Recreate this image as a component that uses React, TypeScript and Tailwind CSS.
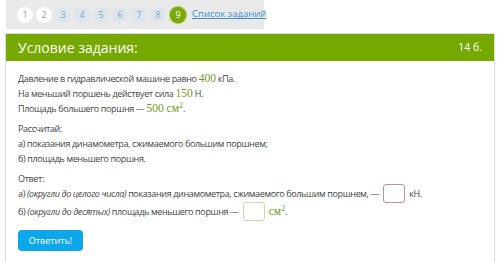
const nums = [1, 2, 3, 4, 5, 6, 7, 8];

function Val({ children }: { children: React.ReactNode }) {
  return (
    <span className="text-[#6f9a1c] text-[11.5px] tracking-normal" style={{ fontFamily: '"Liberation Serif", serif' }}>
      {children}
    </span>
  );
}

export default function App() {
  return (
    <div className="w-[500px] h-[262px] bg-white overflow-hidden text-[#444]" style={{ fontFamily: '"Open Sans", sans-serif' }}>
      {/* навигация по заданиям */}
      <div className="flex items-center h-[29px] w-[258px] ml-[6px] bg-[#e9e9e9] pl-[11px] gap-[3px]">
        {nums.map((n) => (
          <div
            key={n}
            className={
              "w-[16px] h-[16px] shrink-0 rounded-full flex items-center justify-center text-[9px] " +
              (n <= 2 ? "bg-white text-[#8a9aa8]" : "bg-[#dde6ec] text-[#7fa8c4]")
            }
          >
            {n}
          </div>
        ))}
        <div className="w-[16px] h-[16px] shrink-0 rounded-full bg-[#7aa90b] flex items-center justify-center text-[9px] text-white ml-[1px] ring-1 ring-[#a5c94a]">
          9
        </div>
        <a className="ml-[3px] text-[9.5px] text-[#3d8fd0] underline whitespace-nowrap">Список заданий</a>
      </div>

      <div className="mx-[5px] mt-[4px] border border-[#dcdcdc]">
        <div className="bg-[#76a900] h-[27px] flex items-center justify-between px-[12px] text-white">
          <span className="text-[14px]">Условие задания:</span>
          <span className="text-[10.5px]">14 б.</span>
        </div>

        <div className="px-[12px] pt-[10px] text-[9px] tracking-[-0.36px] leading-[15px] whitespace-nowrap">
          <p>
            Давление в гидравлической машине равно <Val>400</Val> кПа.
          </p>
          <p>
            На меньший поршень действует сила <Val>150</Val> Н.
          </p>
          <p>
            Площадь большего поршня — <Val>500 см<sup className="text-[8px]">2</sup></Val>.
          </p>

          <p className="mt-[5px]">Рассчитай:</p>
          <p>а) показания динамометра, сжимаемого большим поршнем;</p>
          <p>б) площадь меньшего поршня.</p>

          <p className="mt-[5px]">Ответ:</p>
          <div className="flex items-center h-[19px] mt-[-2px]">
            <span>
              а) <i>(округли до целого числа)</i> показания динамометра, сжимаемого большим поршнем, —
            </span>
            <span className="inline-block w-[22px] h-[19px] border border-[#c78bb0] rounded-[3px] mx-[4px]"></span>
            <span>кН.</span>
          </div>
          <div className="flex items-center h-[19px] mt-[-1px]">
            <span>
              б) <i>(округли до десятых)</i> площадь меньшего поршня —
            </span>
            <span className="inline-block w-[22px] h-[19px] border border-[#c9d9a8] rounded-[3px] mx-[4px]"></span>
            <Val>
              см<sup className="text-[8px]">2</sup>
            </Val>
            <span>.</span>
          </div>

          <button className="mt-[9px] mb-[12px] w-[65px] h-[21px] rounded-[4px] bg-[#0da6ea] text-white text-[9px] tracking-normal">
            Ответить!
          </button>
        </div>
      </div>
    </div>
  );
}
